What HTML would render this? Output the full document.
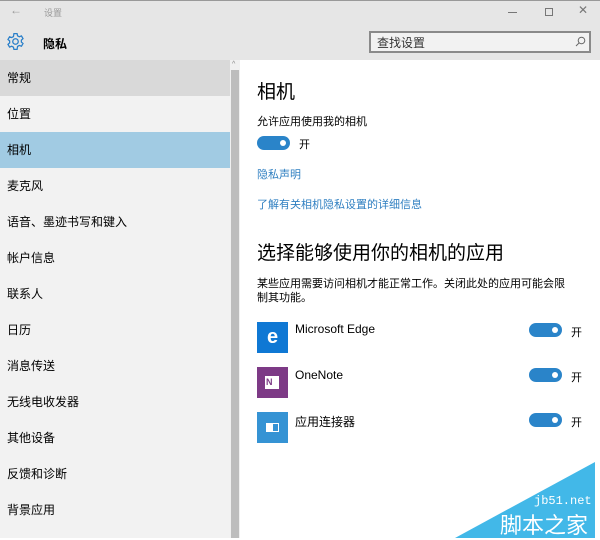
<!DOCTYPE html>
<html><head><meta charset="utf-8"><style>
*{margin:0;padding:0;box-sizing:border-box}
body{width:600px;height:538px;overflow:hidden;background:#fff;font-family:"Liberation Sans","Noto Sans CJK SC",sans-serif;color:#000;position:relative}
.a{position:absolute;white-space:nowrap}
.top{position:absolute;left:0;top:0;width:600px;height:60px;background:#e6e6e6;border-top:1px solid #999}
.nav{position:absolute;left:0;top:60px;width:230px;height:478px;background:#f2f2f2}
.sb{position:absolute;left:230px;top:60px;width:10px;height:478px;background:#f0f0f0}
.sb div{position:absolute;left:1px;top:10px;width:8px;height:468px;background:#bdbdbd}
.it{position:absolute;left:0;width:230px;height:36px;line-height:36px;padding-left:7px;font-size:12px;color:#000}
.tg{position:absolute;width:33px;height:14px;border-radius:7px;background:#2a84c9}
.tg:after{content:"";position:absolute;right:4px;top:4px;width:6px;height:6px;border-radius:50%;background:#fff}
.lk{color:#2f7fc1;font-size:11px}
.ic{position:absolute;left:257px;width:31px;height:31px}
</style></head><body>
<div class="top"></div>
<div class="a" style="left:10px;top:3px;font-size:12px;color:#999">←</div>
<div class="a" style="left:44px;top:6px;font-size:9px;color:#999">设置</div>
<div class="a" style="left:508px;top:12px;width:9px;height:1px;background:#777"></div>
<div class="a" style="left:545px;top:8px;width:8px;height:8px;border:1px solid #777"></div>
<div class="a" style="left:578px;top:3px;font-size:12px;color:#777">✕</div>
<svg class="a" style="left:6px;top:32px" width="19" height="19" viewBox="0 0 24 24" fill="none" stroke="#2a7fc9" stroke-width="1.6"><circle cx="12" cy="12" r="3.5"/><path d="M10 2h4l.6 2.8 2.2 1.2 2.7-1 2 3.4-2.1 1.9v2.4l2.1 1.9-2 3.4-2.7-1-2.2 1.2L14 22h-4l-.6-2.8-2.2-1.2-2.7 1-2-3.4 2.1-1.9v-2.4L2.5 9.4l2-3.4 2.7 1 2.2-1.2z"/></svg>
<div class="a" style="left:43px;top:35px;font-size:12px;font-weight:bold">隐私</div>
<div class="a" style="left:369px;top:31px;width:222px;height:22px;background:#f2f2f2;border:2px solid #8a8a8a"></div>
<div class="a" style="left:377px;top:34px;font-size:12px;color:#333">查找设置</div>
<svg class="a" style="left:575px;top:36px" width="11" height="11" viewBox="0 0 11 11" fill="none" stroke="#666"><circle cx="6.5" cy="4.5" r="3.3"/><path d="M4.2 6.8L1 10"/></svg>
<div class="nav">
<div class="it" style="top:0;background:#d9d9d9">常规</div>
<div class="it" style="top:36px">位置</div>
<div class="it" style="top:72px;background:#a1cbe3">相机</div>
<div class="it" style="top:108px">麦克风</div>
<div class="it" style="top:144px">语音、墨迹书写和键入</div>
<div class="it" style="top:180px">帐户信息</div>
<div class="it" style="top:216px">联系人</div>
<div class="it" style="top:252px">日历</div>
<div class="it" style="top:288px">消息传送</div>
<div class="it" style="top:324px">无线电收发器</div>
<div class="it" style="top:360px">其他设备</div>
<div class="it" style="top:396px">反馈和诊断</div>
<div class="it" style="top:432px">背景应用</div>
</div>
<div class="sb"><div></div></div>
<div class="a" style="left:232px;top:61px;font-size:7px;color:#888">^</div>
<div class="a" style="left:257px;top:77px;font-size:19px">相机</div>
<div class="a" style="left:257px;top:113px;font-size:11px">允许应用使用我的相机</div>
<div class="tg" style="left:257px;top:136px"></div>
<div class="a" style="left:299px;top:136px;font-size:11px">开</div>
<div class="a lk" style="left:257px;top:166px">隐私声明</div>
<div class="a lk" style="left:257px;top:196px">了解有关相机隐私设置的详细信息</div>
<div class="a" style="left:257px;top:238px;font-size:19px">选择能够使用你的相机的应用</div>
<div class="a" style="left:257px;top:277px;font-size:11px;line-height:14px">某些应用需要访问相机才能正常工作。关闭此处的应用可能会限<br>制其功能。</div>
<div class="ic" style="top:322px;background:#0f78d4;color:#fff;font-size:20px;font-weight:bold;text-align:center;line-height:30px">e</div>
<div class="a" style="left:295px;top:322px;font-size:12px">Microsoft Edge</div>
<div class="tg" style="left:529px;top:323px"></div><div class="a" style="left:571px;top:324px;font-size:11px">开</div>
<div class="ic" style="top:367px;background:#7d3a86"><div style="position:absolute;left:8px;top:9px;width:14px;height:13px;background:#fff;color:#7d3a86;font-size:9px;font-weight:bold;line-height:13px;padding-left:1px">N</div></div>
<div class="a" style="left:295px;top:368px;font-size:12px">OneNote</div>
<div class="tg" style="left:529px;top:368px"></div><div class="a" style="left:571px;top:369px;font-size:11px">开</div>
<div class="ic" style="top:412px;background:#3593d4"><div style="position:absolute;left:9px;top:11px;width:13px;height:9px;border:1px solid #fff"><div style="width:6px;height:7px;background:#fff"></div></div></div>
<div class="a" style="left:295px;top:413px;font-size:12px">应用连接器</div>
<div class="tg" style="left:529px;top:413px"></div><div class="a" style="left:571px;top:414px;font-size:11px">开</div>
<svg class="a" style="left:455px;top:462px" width="145" height="76"><polygon points="0,76 140,0 140,76" fill="#42b8e8"/></svg>
<div class="a" style="left:534px;top:494px;font-size:12px;color:#fff;font-family:'Liberation Mono',monospace">jb51.net</div>
<div class="a" style="left:500px;top:508px;font-size:22px;color:#fff">脚本之家</div>
</body></html>
